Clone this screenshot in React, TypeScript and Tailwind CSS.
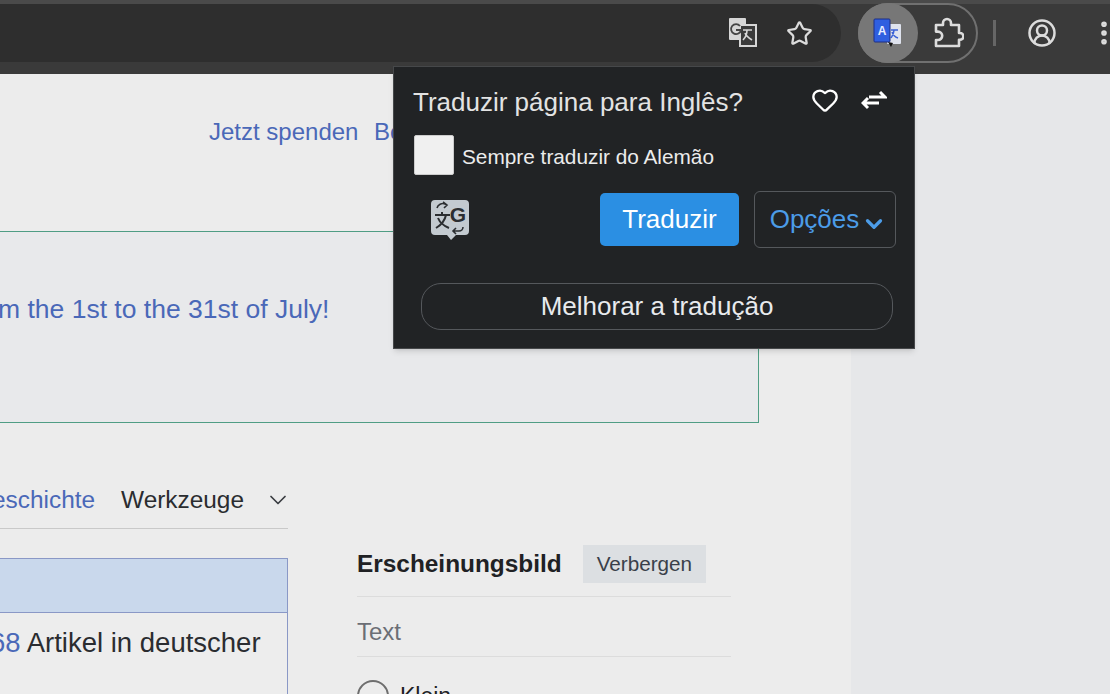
import { ChevronDown, Star, CircleUserRound, EllipsisVertical, Heart } from "lucide-react";

const TranslateMini = () => (
  <svg width="30" height="32" viewBox="0 0 30 32">
    <rect x="1" y="1" width="17" height="22" rx="1" fill="#d6d6d6" />
    <rect x="12" y="8" width="16" height="21" fill="#3a3a3a" stroke="#d6d6d6" strokeWidth="2" />
    <path d="M15 13h9M19 13c0 5-2 8-4 10M17 16c1 3 4 5 7 7" stroke="#d6d6d6" strokeWidth="1.6" fill="none" />
    <path d="M12 9a5 5 0 1 0 1 4H8" stroke="#444" strokeWidth="1.8" fill="none" />
  </svg>
);

const ActiveTranslate = () => (
  <svg width="32" height="34" viewBox="0 0 32 34">
    <rect x="15" y="8" width="14" height="20" rx="1" fill="#dfe3ee" />
    <path d="M19 14h7M22 14c0 4-2 6-3 8M20 16c1 3 3 5 6 6" stroke="#3b62d6" strokeWidth="1.5" fill="none" />
    <rect x="2" y="3" width="16" height="23" rx="1" fill="#2f5fe0" stroke="#1c2f86" />
    <text x="10" y="19" textAnchor="middle" fontSize="12" fontWeight="700" fontFamily="Liberation Sans" fill="#e8edff">A</text>
    <path d="M16 26l3 5 2-4z" fill="#111" />
  </svg>
);

const GoogleTranslateBubble = () => (
  <svg width="40" height="42" viewBox="0 0 40 42">
    <path d="M5 1h30a4 4 0 0 1 4 4v27a4 4 0 0 1-4 4H26l-5 5-4-5H5a4 4 0 0 1-4-4V5a4 4 0 0 1 4-4z" fill="#c3cad0" />
    <path d="M5 16h15M12 16v-3M16 16c-1 5-5 10-10 13M8 19c2 5 6 8 11 10" stroke="#2b2e31" strokeWidth="2" fill="none" />
    <path d="M7 9a6 6 0 0 1 8-4l2 1M13 3l4 3-3 3" stroke="#2b2e31" strokeWidth="1.6" fill="none" />
    <text x="28" y="23" textAnchor="middle" fontSize="21" fontWeight="700" fontFamily="Liberation Sans" fill="#2b2e31">G</text>
    <path d="M33 28a4 4 0 0 1-4 4h-6M26 29l-3 3 3 3" stroke="#2b2e31" strokeWidth="1.6" fill="none" />
  </svg>
);

const PuzzleOutline = () => (
  <svg width="32" height="32" viewBox="0 0 32 32" fill="none" stroke="#dcdcdc" strokeWidth="2.6" strokeLinejoin="round">
    <path d="M4 8h7V6a4 4 0 0 1 8 0v2h8v8h1a3.4 3.4 0 0 1 0 6.8h-1V29H4v-6h2a4.2 4.2 0 0 0 0-8.4H4z" />
  </svg>
);

const SwapArrows = () => (
  <svg width="26" height="20" viewBox="0 0 26 20" fill="none" stroke="#fff" strokeWidth="3">
    <path d="M8 7h16M19 2l5 5H19" />
    <path d="M18 13H2M7 8l-5 5 5 5" />
  </svg>
);

const TranslatePopup = () => (
  <div className="absolute z-10 left-[393px] top-[66px] w-[522px] h-[283px] bg-[#212325] border border-[#46484a] text-[#e8eaed] shadow-md">
    <div className="flex items-center justify-between pl-[19px] pr-[27px] pt-[17px]">
      <span className="text-[26px] leading-[36px] text-[#e3e3e3] whitespace-nowrap">Traduzir página para Inglês?</span>
      <div className="flex items-center gap-[22px] -mt-[4px]">
        <Heart size={28} strokeWidth={2} className="text-white" />
        <SwapArrows />
      </div>
    </div>
    <div className="flex items-center gap-2 pl-5 mt-[15px]">
      <div className="w-10 h-10 bg-[#f0f0f0] rounded-[2px] border border-[#ccc]" />
      <span className="text-[20.8px] text-[#ececec] mt-1 whitespace-nowrap">Sempre traduzir do Alemão</span>
    </div>
    <div className="flex items-center mt-[16px] pl-9">
      <GoogleTranslateBubble />
      <button className="ml-[130px] w-[139px] h-[53px] rounded-[5px] bg-[#2b8fe3] text-white text-[26px]">Traduzir</button>
      <button className="ml-[15px] w-[142px] h-[57px] pl-[7px] rounded-[6px] border border-[#55585c] text-[#4c9ce8] text-[26px] flex items-center justify-center gap-[2px]">
        Opções <ChevronDown size={26} strokeWidth={3} className="mt-2" />
      </button>
    </div>
    <div className="ml-[27px] mt-[35px] h-[47px] w-[472px] rounded-[20px] border border-[#55585c] flex items-center justify-center text-[26px] text-[#e8eaed]">
      Melhorar a tradução
    </div>
  </div>
);

const Toolbar = () => (
  <div className="h-[74px] bg-[#3a3a3a] border-t-4 border-[#4a4a4a] flex items-center pb-3">
    <div className="h-[58px] flex-1 ml-[-30px] bg-[#2e2e2e] rounded-r-[30px] flex items-center justify-end pr-[28px] gap-[28px]">
      <TranslateMini />
      <Star size={27} strokeWidth={2} className="text-[#dcdcdc]" />
    </div>
    <div className="ml-[17px] w-[120px] h-[60px] rounded-full border-2 border-[#707070] flex items-center shrink-0">
      <div className="w-[60px] h-[60px] rounded-full bg-[#777] -ml-[2px] flex items-center justify-center shrink-0">
        <ActiveTranslate />
      </div>
      <div className="ml-[14px]">
        <PuzzleOutline />
      </div>
    </div>
    <div className="w-[3px] h-[26px] bg-[#666] ml-[15px] shrink-0" />
    <CircleUserRound size={30} strokeWidth={2} className="ml-[31px] text-[#dcdcdc] shrink-0" />
    <EllipsisVertical size={30} strokeWidth={2.5} className="ml-[32px] -mr-[9px] text-[#dcdcdc] shrink-0" />
  </div>
);

export default function App() {
  return (
    <div className="relative w-[1110px] h-[694px] overflow-hidden bg-[#e6e7e9] font-['Liberation_Sans',Arial,sans-serif]">
      <Toolbar />
      <TranslatePopup />
      <div className="flex">
        <div className="w-[851px] h-[620px] bg-[#ececec] overflow-hidden">
          <div className="pl-[209px] pt-[44px] text-[24px] leading-[28px] text-[#4a68b8] whitespace-nowrap">
            Jetzt spenden <span className="ml-[9px]">Benutzerkonto</span>
          </div>
          <div className="-ml-px mt-[85px] w-[760px] h-[192px] border border-[#4f9d84] bg-[#e8e9eb] pt-[61px] text-[26.5px] leading-[32px] text-[#4a68b8] whitespace-nowrap overflow-hidden">
            <span className="block -ml-[2px]">m the 1st to the 31st of July!</span>
          </div>
          <div className="flex mt-[62px] items-start">
            <div className="w-[288px] shrink-0">
              <div className="h-[44px] border-b border-[#c9c9c9] flex items-start text-[24.4px] leading-[30px] whitespace-nowrap">
                <span className="text-[#4a68b8] -ml-[8px]">eschichte</span>
                <span className="text-[#2a2c30] ml-[26px]">Werkzeuge</span>
                <ChevronDown size={28} strokeWidth={1.5} className="ml-[20px] mt-[1px] text-[#3a3d42] shrink-0" />
              </div>
              <div className="mt-[29px] -ml-[2px] h-[200px] border border-[#8a98c6] bg-[#ededed]">
                <div className="h-[54px] bg-[#c9d8ec] border-b border-[#8a98c6]" />
                <div className="pt-[14px] text-[27.5px] leading-[32px] text-[#2a2c30] whitespace-nowrap">
                  <span className="text-[#4a68b8] -ml-[9px]">68</span> Artikel in deutscher
                </div>
              </div>
            </div>
            <div className="ml-[69px] w-[374px] pt-[60px]">
              <div className="h-[52px] w-full border-b border-[#dcdcdc] flex items-start">
                <span className="font-bold text-[24.4px] leading-[38px] text-[#202124] whitespace-nowrap">Erscheinungsbild</span>
                <span className="ml-[21px] h-[38px] px-[14px] bg-[#dcdfe2] text-[#3a3f4a] text-[20.7px] leading-[38px]">Verbergen</span>
              </div>
              <div className="h-[60px] border-b border-[#dcdcdc] text-[#6b6e75] text-[24px] leading-[70px]">Text</div>
              <div className="flex items-center gap-[11px] mt-[22px]">
                <div className="w-[32px] h-[32px] rounded-full border-2 border-[#6e6e6e] shrink-0" />
                <span className="text-[23px] text-[#202124]">Klein</span>
              </div>
            </div>
          </div>
        </div>
        <div className="flex-1" />
      </div>
    </div>
  );
}
